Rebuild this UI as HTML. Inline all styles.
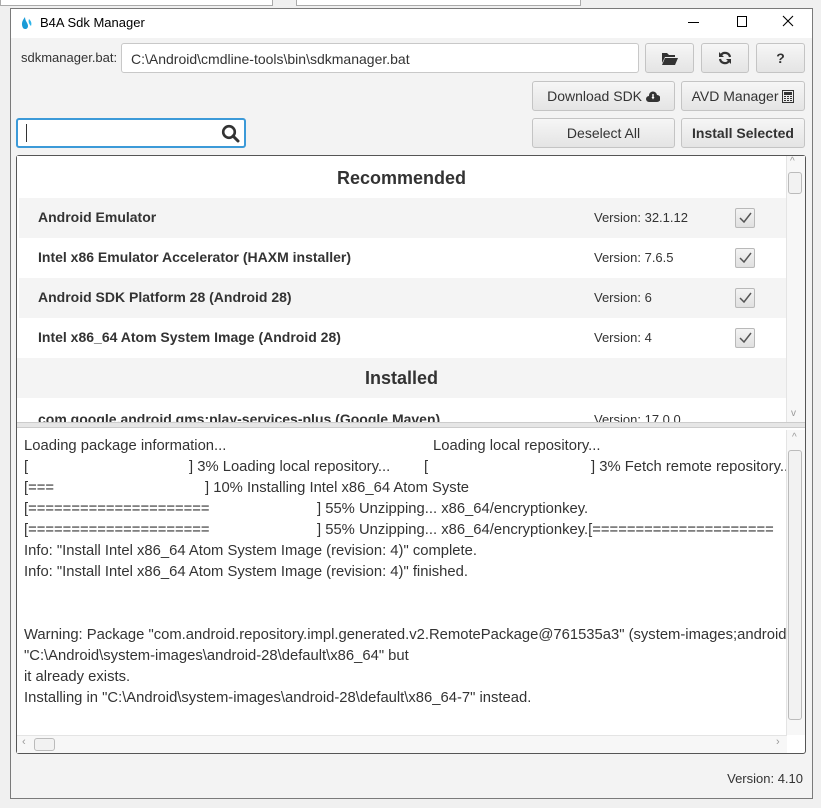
<!DOCTYPE html>
<html><head><style>
*{box-sizing:border-box;margin:0;padding:0}
body{width:821px;height:808px;background:#f0f0f0;position:relative;overflow:hidden;font-family:"Liberation Sans",sans-serif;font-size:14px;color:#333}
.a{position:absolute}
.btn{position:absolute;border:1px solid #c4c4c4;border-radius:3px;background:linear-gradient(#f6f6f6,#e4e4e4);display:flex;align-items:center;justify-content:center;color:#333;font-size:14px}
.row{position:absolute;left:19px;width:767px;height:40px;font-weight:bold;font-size:14px;color:#333}
.row .n{position:absolute;left:19px;top:11px}
.row .v{position:absolute;left:575px;top:12px;font-weight:normal;font-size:13px}
.row .c{position:absolute;left:716px;top:10px;width:20px;height:20px;border:1px solid #b9b9b9;border-radius:2px;background:linear-gradient(#f4f4f4,#e0e0e0)}
.log{font-size:14.8px}
.log div{height:21px;white-space:pre;position:relative}
.log span{position:absolute;top:0}
</style></head><body>
<div class="a" style="left:0;top:0;width:273px;height:6px;border:1px solid #aaa;border-top:none;background:#fff"></div>
<div class="a" style="left:296px;top:0;width:285px;height:6px;border:1px solid #aaa;border-top:none;background:#fff"></div>
<div class="a" style="left:10px;top:8px;width:803px;height:791px;border:1px solid #7a7a7a;background:#f3f3f3"></div>
<div class="a" style="left:11px;top:9px;width:801px;height:29px;background:#fff"></div>
<svg class="a" style="left:20px;top:16px" width="14" height="14" viewBox="0 0 14 14"><path d="M5 1C2 5 1 8 3 12c2 2 5 1 5-2C8 7 5 5 5 1z" fill="#1a9bd7"/><path d="M9 3c-1 3 0 5 2 7 1-3 0-5-2-7z" fill="#2fb5ea"/></svg>
<div class="a" style="left:40px;top:15px;font-size:13px;color:#000">B4A Sdk Manager</div>
<div class="a" style="left:688px;top:22px;width:11px;height:1px;background:#000"></div>
<div class="a" style="left:737px;top:16px;width:10px;height:11px;border:1px solid #000"></div>
<svg class="a" style="left:782px;top:15px" width="12" height="12"><path d="M1 1L11 11M11 1L1 11" stroke="#000" stroke-width="1.1"/></svg>
<div class="a" style="left:21px;top:50px;font-size:13px">sdkmanager.bat:</div>
<div class="a" style="left:121px;top:43px;width:518px;height:30px;border:1px solid #c8c8c8;border-radius:3px;background:#fff;padding:7px 0 0 9px">C:\Android\cmdline-tools\bin\sdkmanager.bat</div>
<div class="btn" style="left:645px;top:43px;width:49px;height:30px"><svg width="16" height="13" viewBox="0 0 16 13"><path d="M0 1h5l2 2h6v2H3L0 11z M3 6h13l-3 7H0z" fill="#333"/></svg></div>
<div class="btn" style="left:701px;top:43px;width:48px;height:30px"><svg width="14" height="14" viewBox="0 0 14 14"><path d="M12 6A5 5 0 0 0 3 4" stroke="#333" stroke-width="2.2" fill="none"/><path d="M1 1v5h5z" fill="#333"/><path d="M2 8a5 5 0 0 0 9 2" stroke="#333" stroke-width="2.2" fill="none"/><path d="M13 13V8H8z" fill="#333"/></svg></div>
<div class="btn" style="left:756px;top:43px;width:49px;height:30px;font-weight:bold">?</div>
<div class="btn" style="left:532px;top:81px;width:143px;height:30px">Download SDK&nbsp;<svg width="14" height="11" viewBox="0 0 14 11"><path d="M3 11a3 3 0 0 1 0-6 4 4 0 0 1 8-1 3.5 3.5 0 0 1 0 7z" fill="#333"/><path d="M5.5 6h3L7 8.5z M6.3 3h1.4v3H6.3z" fill="#fff"/></svg></div>
<div class="btn" style="left:681px;top:81px;width:124px;height:30px">AVD Manager&nbsp;<svg width="12" height="13"><rect x="0.5" y="0.5" width="11" height="12" fill="none" stroke="#333"/><path d="M2 2h8v3H2zM2 6h2v1H2zM5 6h2v1H5zM8 6h2v1H8zM2 8h2v1H2zM5 8h2v1H5zM8 8h2v1H8zM2 10h2v1H2zM5 10h2v1H5zM8 10h2v1H8z" fill="#333"/></svg></div>
<div class="a" style="left:16px;top:118px;width:230px;height:30px;border:2px solid #3c9ad8;border-radius:3px;background:#fff"></div>
<div class="a" style="left:26px;top:124px;width:1px;height:18px;background:#333"></div>
<svg class="a" style="left:221px;top:124px" width="19" height="19" viewBox="0 0 19 19"><circle cx="8" cy="8" r="5.8" stroke="#333" stroke-width="2.6" fill="none"/><path d="M12 12l5 5" stroke="#333" stroke-width="3" stroke-linecap="round"/></svg>
<div class="btn" style="left:532px;top:118px;width:143px;height:30px">Deselect All</div>
<div class="btn" style="left:681px;top:118px;width:124px;height:30px;font-weight:bold">Install Selected</div>
<div class="a" style="left:16px;top:155px;width:790px;height:599px;border:1px solid #555;border-radius:3px;background:#fff"></div>
<div class="a" style="left:17px;top:156px;width:788px;height:266px;background:#fff;overflow:hidden">
 <div class="a" style="left:0;top:12px;width:769px;text-align:center;font-weight:bold;font-size:18px">Recommended</div>
 <div class="row" style="left:2px;top:42px;background:#f4f4f4"><span class="n">Android Emulator</span><span class="v">Version: 32.1.12</span><span class="c"><svg width="18" height="18"><path d="M4 9l4 4 7-9" stroke="#555" stroke-width="1.5" fill="none"/></svg></span></div>
 <div class="row" style="left:2px;top:82px"><span class="n">Intel x86 Emulator Accelerator (HAXM installer)</span><span class="v">Version: 7.6.5</span><span class="c"><svg width="18" height="18"><path d="M4 9l4 4 7-9" stroke="#555" stroke-width="1.5" fill="none"/></svg></span></div>
 <div class="row" style="left:2px;top:122px;background:#f4f4f4"><span class="n">Android SDK Platform 28 (Android 28)</span><span class="v">Version: 6</span><span class="c"><svg width="18" height="18"><path d="M4 9l4 4 7-9" stroke="#555" stroke-width="1.5" fill="none"/></svg></span></div>
 <div class="row" style="left:2px;top:162px"><span class="n">Intel x86_64 Atom System Image (Android 28)</span><span class="v">Version: 4</span><span class="c"><svg width="18" height="18"><path d="M4 9l4 4 7-9" stroke="#555" stroke-width="1.5" fill="none"/></svg></span></div>
 <div class="a" style="left:0;top:202px;width:769px;height:40px;background:#f4f4f4;text-align:center;font-weight:bold;font-size:18px;padding-top:10px">Installed</div>
 <div class="row" style="left:2px;top:242px"><span class="n" style="top:13px">com.google.android.gms:play-services-plus (Google Maven)</span><span class="v" style="top:14px">Version: 17.0.0</span></div>
 <div class="a" style="left:769px;top:0;width:19px;height:268px;background:#f7f7f7;border-left:1px solid #e4e4e4"></div>
 <div class="a" style="left:771px;top:16px;width:14px;height:22px;border:1px solid #bbb;border-radius:3px;background:#f2f2f2"></div>
 <div class="a" style="left:773px;top:0;font-size:10px;color:#999">^</div>
 <div class="a" style="left:774px;top:252px;font-size:10px;color:#999">v</div>
</div>
<div class="a" style="left:17px;top:422px;width:788px;height:6px;background:#e6e6e6;border-top:1px solid #ccc;border-bottom:1px solid #ccc"></div>
<div class="a log" style="left:24px;top:438px;width:762px;height:295px;overflow:hidden">
<div>Loading package information...<span style="left:409px">Loading local repository...</span></div>
<div>[<span style="left:165px">] 3% Loading local repository...</span><span style="left:400px">[</span><span style="left:567px">] 3% Fetch remote repository...</span></div>
<div>[===<span style="left:181px">] 10% Installing Intel x86_64 Atom Syste</span></div>
<div>[=====================<span style="left:293px">] 55% Unzipping... x86_64/encryptionkey.</span></div>
<div>[=====================<span style="left:293px">] 55% Unzipping... x86_64/encryptionkey.[=====================</span></div>
<div>Info: "Install Intel x86_64 Atom System Image (revision: 4)" complete.</div>
<div>Info: "Install Intel x86_64 Atom System Image (revision: 4)" finished.</div>
<div></div><div></div>
<div>Warning: Package "com.android.repository.impl.generated.v2.RemotePackage@761535a3" (system-images;android-28;default;x86_64)</div>
<div>"C:\Android\system-images\android-28\default\x86_64" but</div>
<div>it already exists.</div>
<div>Installing in "C:\Android\system-images\android-28\default\x86_64-7" instead.</div>
</div>
<div class="a" style="left:786px;top:430px;width:19px;height:305px;background:#f7f7f7;border-left:1px solid #e4e4e4"></div>
<div class="a" style="left:792px;top:432px;font-size:10px;color:#999">^</div>
<div class="a" style="left:788px;top:450px;width:14px;height:270px;border:1px solid #bbb;border-radius:3px;background:#f2f2f2"></div>
<div class="a" style="left:17px;top:735px;width:770px;height:18px;background:#f7f7f7;border-top:1px solid #e4e4e4"></div>
<div class="a" style="left:22px;top:736px;font-size:11px;color:#999">&lsaquo;</div>
<div class="a" style="left:776px;top:736px;font-size:11px;color:#999">&rsaquo;</div>
<div class="a" style="left:34px;top:738px;width:21px;height:13px;border:1px solid #bbb;border-radius:3px;background:#f2f2f2"></div>
<div class="a" style="right:18px;top:771px;font-size:13px">Version: 4.10</div>
</body></html>
